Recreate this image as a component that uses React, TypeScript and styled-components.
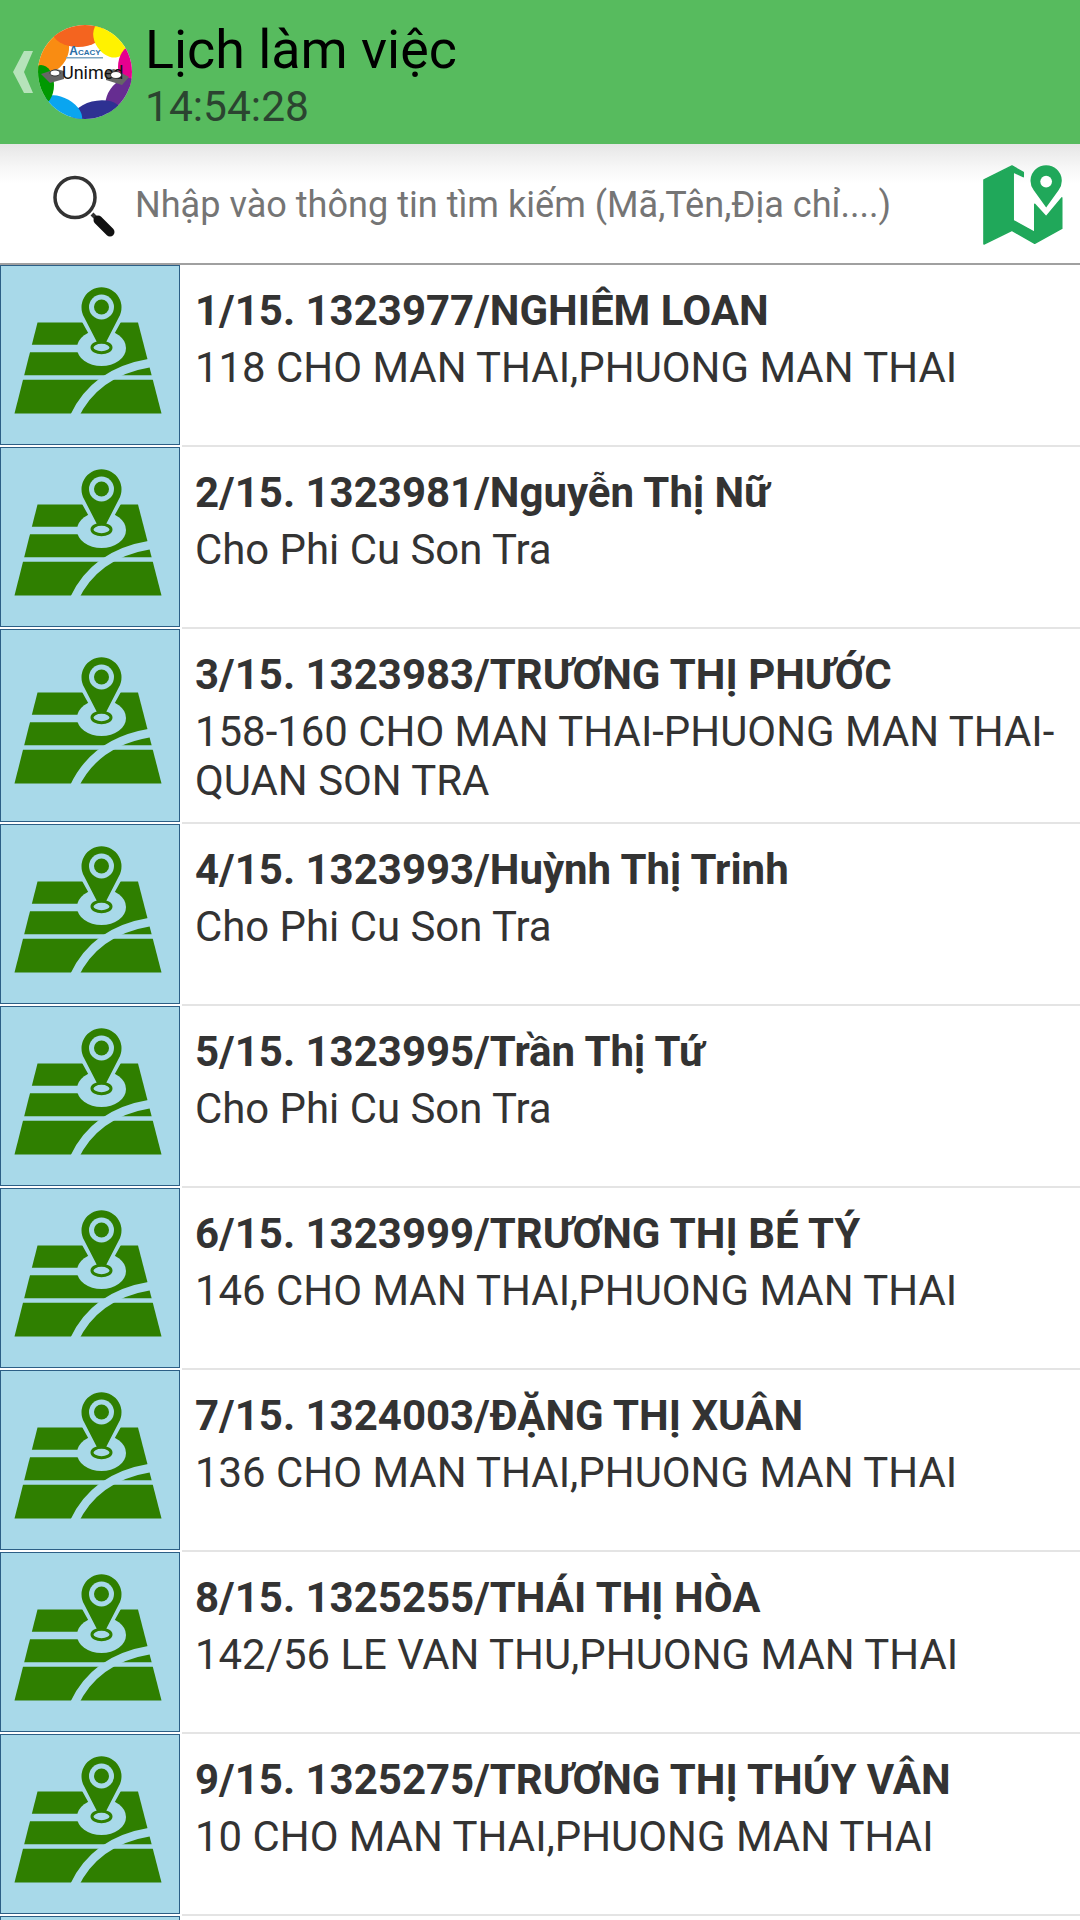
import React from "react";
import styled, { createGlobalStyle } from "styled-components";

const Global = createGlobalStyle`
  html, body { margin: 0; padding: 0; background: #fff; overflow: hidden; }
  #root { height: 1920px; overflow: hidden; }
  * { box-sizing: border-box; }
`;

const Page = styled.div`
  width: 1080px;
  height: 1920px;
  overflow: hidden;
  font-family: Roboto, "Noto Sans", sans-serif;
  background: #fff;
`;

const Header = styled.header`
  height: 144px;
  background: #57bb5e;
  display: flex;
  align-items: center;
  padding-left: 13px;
`;

const Back = styled.svg`
  width: 20px;
  height: 42px;
  margin-right: 5px;
  flex: none;
`;

const Logo = styled.svg`
  width: 94px;
  height: 94px;
  flex: none;
  margin-right: 13px;
`;

const TitleBlock = styled.div`
  display: flex;
  flex-direction: column;
  align-self: flex-start;
  padding-top: 20px;
`;

const Title = styled.div`
  font-size: 53.8px;
  line-height: 60px;
  color: #000;
`;

const Clock = styled.div`
  font-size: 42.5px;
  line-height: 54px;
  color: #2b4430;
`;

const SearchBar = styled.div`
  height: 121px;
  display: flex;
  align-items: center;
  background: linear-gradient(#e6e6e6 0, #f6f6f6 22px, #fff 40px);
  border-bottom: 2px solid #a0a0a0;
  padding-left: 50px;
`;

const Magnifier = styled.svg`
  width: 68px;
  height: 68px;
  flex: none;
  margin-right: 17px;
`;

const Placeholder = styled.div`
  font-size: 36.1px;
  color: #757575;
  flex: 1;
  white-space: nowrap;
  padding-top: 3px;
`;

const MapButton = styled.svg`
  width: 84px;
  height: 84px;
  flex: none;
  margin-right: 15px;
`;

const Row = styled.div`
  display: flex;
  align-items: stretch;
  min-height: 182px;
`;

const Thumb = styled.div`
  width: 180px;
  flex: none;
  margin-bottom: 2px;
  background: #a8d9e9;
  border: 1.5px solid #2c5f86;
  display: flex;
  align-items: center;
  justify-content: center;
`;

const ThumbIcon = styled.svg`
  width: 177px;
  height: 177px;
  flex: none;
`;

const Body = styled.div`
  flex: 1;
  min-width: 0;
  margin-left: 2px;
  padding: 13px 12px 0 13px;
  border-bottom: 2px solid #e4e4e4;
`;

const Name = styled.div`
  font-size: 42px;
  line-height: 65px;
  font-weight: 700;
  color: #333;
`;

const Address = styled.div`
  font-size: 41.9px;
  line-height: 49px;
  color: #333;
  padding-bottom: 17px;
`;

const rows = [
  ["1/15. 1323977/NGHIÊM LOAN", "118 CHO MAN THAI,PHUONG MAN THAI"],
  ["2/15. 1323981/Nguyễn Thị Nữ", "Cho Phi Cu Son Tra"],
  ["3/15. 1323983/TRƯƠNG THỊ PHƯỚC", "158-160 CHO MAN THAI-PHUONG MAN THAI-QUAN SON TRA"],
  ["4/15. 1323993/Huỳnh Thị Trinh", "Cho Phi Cu Son Tra"],
  ["5/15. 1323995/Trần Thị Tứ", "Cho Phi Cu Son Tra"],
  ["6/15. 1323999/TRƯƠNG THỊ BÉ TÝ", "146 CHO MAN THAI,PHUONG MAN THAI"],
  ["7/15. 1324003/ĐẶNG THỊ XUÂN", "136 CHO MAN THAI,PHUONG MAN THAI"],
  ["8/15. 1325255/THÁI THỊ HÒA", "142/56 LE VAN THU,PHUONG MAN THAI"],
  ["9/15. 1325275/TRƯƠNG THỊ THÚY VÂN", "10 CHO MAN THAI,PHUONG MAN THAI"],
  ["", ""],
];

const GREEN = "#2f7f00";
const SKY = "#a8d9e9";

const PinMap = () => (
  <ThumbIcon viewBox="0 0 177 177">
    <path d="M35.5 55.5H136L159.5 146.5H12.5Z" fill={GREEN} />
    <path d="M0 81.5H76" stroke={SKY} strokeWidth="7.5" fill="none" />
    <path d="M0 110.5H177" stroke={SKY} strokeWidth="4.5" fill="none" />
    <ellipse cx="99.5" cy="81" rx="24.5" ry="18" fill={SKY} />
    <path d="M72 150C86 120 112 102 148 96" stroke={SKY} strokeWidth="8.5" fill="none" />
    <path d="M99.5 90L79 53A24 24 0 1 1 120 53Z" fill={SKY} />
    <path d="M99.5 84L82 50A20 20 0 1 1 117 50Z" fill={GREEN} />
    <circle cx="99.5" cy="40" r="12.5" fill={SKY} />
    <circle cx="99.5" cy="40" r="7.5" fill={GREEN} />
    <ellipse cx="99.5" cy="80.5" rx="9.5" ry="5.2" fill={SKY} stroke={GREEN} strokeWidth="3" />
  </ThumbIcon>
);

const UnimedLogo = () => (
  <Logo viewBox="0 0 94 94">
    <defs>
      <clipPath id="disc">
        <circle cx="47" cy="47" r="47" />
      </clipPath>
    </defs>
    <circle cx="47" cy="47" r="47" fill="#fff" />
    <g clipPath="url(#disc)">
      <ellipse cx="11" cy="26" rx="19" ry="23" fill="#f98c12" transform="rotate(30 11 26)" />
      <ellipse cx="40" cy="6" rx="26" ry="16" fill="#f4641f" />
      <ellipse cx="72" cy="14" rx="15" ry="20" fill="#fff200" transform="rotate(-35 72 14)" />
      <ellipse cx="94" cy="42" rx="14" ry="21" fill="#e6008e" />
      <ellipse cx="84" cy="72" rx="14" ry="21" fill="#662d91" transform="rotate(35 84 72)" />
      <ellipse cx="58" cy="92" rx="26" ry="16" fill="#2e3192" transform="rotate(-15 58 92)" />
      <ellipse cx="24" cy="86" rx="22" ry="13" fill="#0aa5f0" transform="rotate(30 24 86)" />
      <ellipse cx="3" cy="60" rx="13" ry="20" fill="#009900" />
      <path d="M3 49L18 44L26 46V54L12 58Z" fill="#666" />
      <path d="M91 52L76 44L68 46V55L84 60Z" fill="#666" />
    </g>
    <text x="47" y="30" fontFamily="Liberation Sans, sans-serif" fontSize="12" fontWeight="700" fontVariant="small-caps" fill="#2a6ea6" textAnchor="middle">Acacy</text>
    <rect x="28" y="32" width="37" height="1.5" fill="#7fa7c2" />
    <text x="24" y="54" fontFamily="Roboto, sans-serif" fontSize="18" fill="#111">Unimed</text>
    <ellipse cx="17" cy="48" rx="5" ry="3" fill="#fff" stroke="#222" strokeWidth="0.8" />
    <ellipse cx="78" cy="50" rx="5.5" ry="3.5" fill="#fff" stroke="#222" strokeWidth="0.8" />
  </Logo>
);

export default function App() {
  return (
    <Page>
      <Global />
      <Header>
        <Back viewBox="0 0 20 42">
          <path d="M11 0H20L11 21L20 42H11L0 21Z" fill="#b6e3ba" />
        </Back>
        <UnimedLogo />
        <TitleBlock>
          <Title>Lịch làm việc</Title>
          <Clock>14:54:28</Clock>
        </TitleBlock>
      </Header>
      <SearchBar>
        <Magnifier viewBox="0 0 68 68">
          <circle cx="25" cy="27.5" r="20" fill="none" stroke="#333" strokeWidth="3.5" />
          <path d="M42 44L48 50" stroke="#333" strokeWidth="4" />
          <path d="M48 50L60 62" stroke="#111" strokeWidth="9" strokeLinecap="round" />
        </Magnifier>
        <Placeholder>Nhập vào thông tin tìm kiếm (Mã,Tên,Địa chỉ....)</Placeholder>
        <MapButton viewBox="0 0 86 86">
          <path
            d="M3 18.3L31.7 4L43.3 10.7V15L33 10V60L55 72V43.3L66.7 56L82.7 36.7V68L55 83.3L31.7 70L3 84Z"
            fill="#20a85a"
            stroke="#20a85a"
            strokeWidth="1.5"
            strokeLinejoin="round"
          />
          <path d="M66.7 46.7L54 29A16 16 0 1 1 79.4 29Z" fill="#20a85a" />
          <circle cx="66.7" cy="20" r="6" fill="#fff" />
        </MapButton>
      </SearchBar>
      {rows.map(([name, address], i) => (
        <Row key={i}>
          <Thumb>
            <PinMap />
          </Thumb>
          <Body>
            <Name>{name}</Name>
            <Address>{address}</Address>
          </Body>
        </Row>
      ))}
    </Page>
  );
}
